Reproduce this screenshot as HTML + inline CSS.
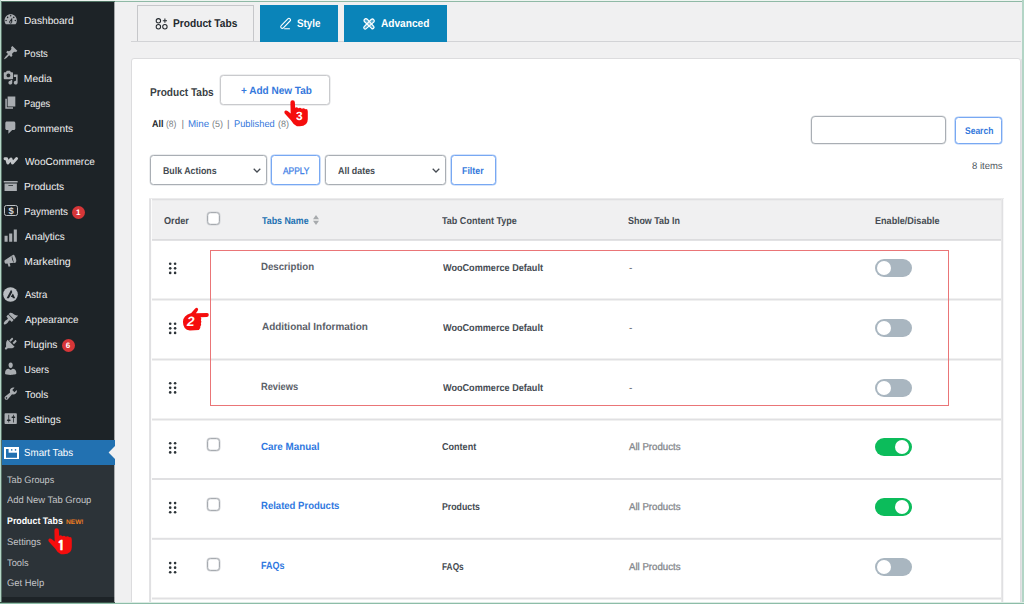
<!DOCTYPE html>
<html lang="en">
<head>
<meta charset="utf-8">
<title>Product Tabs</title>
<style>
*{box-sizing:border-box;margin:0;padding:0}
html,body{width:1024px;height:604px;overflow:hidden;background:#f0f0f1}
body{font-family:"Liberation Sans","DejaVu Sans",sans-serif;font-size:10px;color:#3c434a;position:relative;text-rendering:geometricPrecision}
.a{position:absolute}
.x{position:absolute;white-space:nowrap;line-height:1;transform-origin:0 0;text-rendering:geometricPrecision}
.ic{position:absolute;left:3px;width:15.4px;height:15.4px;fill:#a9adb1}
.badge{position:absolute;width:13px;height:13px;border-radius:50%;background:#d63638;color:#fff;font-size:8px;line-height:13px;text-align:center;font-weight:bold}
.hl{position:absolute;left:151px;width:851px;height:1px;background:#dcdcde}
.tg{position:absolute;left:875px;width:36.6px;height:18px;border-radius:9px;background:#a9b6c0}
.tg i{position:absolute;top:2px;left:2.4px;width:14px;height:14px;border-radius:50%;background:#fff}
.tg.on{background:#0cbc5b}
.tg.on i{left:20.2px}
.cb{position:absolute;left:207px;width:13px;height:13px;border:1px solid #a7abb0;border-radius:3.5px;background:#fff;box-shadow:0 0 0 .5px #d4d6d9,inset 0 0 0 .5px #d9dbde}
.dr{position:absolute;left:168px;width:9px;height:12px;fill:#2c3338}
.btn{position:absolute;border:1px solid #78a8f2;border-radius:3.5px;background:#fff;box-shadow:0 0 0 .6px #a9c8f7}
.sel{position:absolute;border:1px solid #a9aeb4;border-radius:3.5px;background:#fff;box-shadow:0 0 0 .5px #d9dcdf}
.chev{position:absolute;width:8px;height:5px;fill:none;stroke:#454b52;stroke-width:1.25}
.hand{position:absolute;fill:#f50d0d}
</style>
</head>
<body>

<!-- ============ SIDEBAR ============ -->
<div class="a" style="left:0;top:0;width:114px;height:604px;background:#1d2327"></div>
<div class="a" style="left:114px;top:0;width:1px;height:604px;background:#a3a6a8"></div>
<div class="a" style="left:0;top:440px;width:115px;height:25px;background:#2271b1"></div>
<div class="a" style="left:0;top:465px;width:114px;height:132px;background:#2c3338"></div>
<div class="a" style="left:114px;top:465px;width:1px;height:132px;background:#aaadaf"></div>
<svg class="a" style="left:108px;top:446px;width:7px;height:13px" viewBox="0 0 7 13"><path d="M7 0 L0.6 6.5 L7 13 Z" fill="#f0f0f1"/></svg>

<svg class="ic" style="top:12.4px" viewBox="0 0 20 20"><path fill-rule="evenodd" d="M3.76 16h12.48A8.027 8.027 0 0018 11c0-4.42-3.58-8-8-8s-8 3.58-8 8c0 1.9.66 3.63 1.76 5zM10 4c.55 0 1 .45 1 1s-.45 1-1 1-1-.45-1-1 .45-1 1-1zM6 6c.55 0 1 .45 1 1s-.45 1-1 1-1-.45-1-1 .45-1 1-1zm8 0c.55 0 1 .45 1 1s-.45 1-1 1-1-.45-1-1 .45-1 1-1zm-5.37 5.55L12 7v6c0 1.1-.9 2-2 2s-2-.9-2-2c0-.57.24-1.08.63-1.450zM4 10c.55 0 1 .45 1 1s-.45 1-1 1-1-.45-1-1 .45-1 1-1zm12 0c.55 0 1 .45 1 1s-.45 1-1 1-1-.45-1-1 .45-1 1-1zm-5 3c0-.55-.45-1-1-1s-1 .45-1 1 .45 1 1 1 1-.45 1-1z"/></svg>
<svg class="ic" style="top:45.4px" viewBox="0 0 20 20"><path fill-rule="evenodd" d="M10.44 3.02l1.82-1.82 6.36 6.35-1.83 1.82c-1.05-.68-2.48-.57-3.41.36l-.75.75c-.92.93-1.04 2.35-.35 3.41l-1.83 1.82-2.41-2.41-2.8 2.79c-.42.42-3.38 2.71-3.8 2.29s1.860-3.390 2.280-3.810l2.790-2.790L4.100 9.360l1.830-1.820c1.050.690 2.480.570 3.400-.360l.750-.750c.930-.920 1.050-2.350.360-3.410z"/></svg>
<svg class="ic" style="top:70.4px" viewBox="0 0 20 20"><path fill-rule="evenodd" d="M13 11V4c0-.55-.45-1-1-1h-1.67L9 1H5L3.67 3H2c-.55 0-1 .45-1 1v7c0 .55.45 1 1 1h10c.55 0 1-.45 1-1zM7 4.5c1.38 0 2.5 1.12 2.5 2.5S8.38 9.5 7 9.5 4.5 8.38 4.5 7 5.62 4.5 7 4.5zM14 6h5v10.500c0 1.380-1.120 2.500-2.500 2.500S14 17.880 14 16.500s1.120-2.500 2.500-2.500c.170 0 .340.020.500.050V9h-3V6zm-4 8.050V13h2v3.500c0 1.380-1.120 2.500-2.500 2.500S7 17.880 7 16.500 8.120 14 9.500 14c.170 0 .340.020.500.050z"/></svg>
<svg class="ic" style="top:95.4px" viewBox="0 0 20 20"><path fill-rule="evenodd" d="M6 15V2h10v13H6zm-1 1h8v2H3V5h2v11z"/></svg>
<svg class="ic" style="top:120.4px" viewBox="0 0 20 20"><path fill-rule="evenodd" d="M5 2h9c1.100 0 2 .900 2 2v7c0 1.100-.900 2-2 2h-2l-5 5v-5H5c-1.100 0-2-.900-2-2V4c0-1.100.900-2 2-2z"/></svg>
<svg class="ic" style="top:178.4px" viewBox="0 0 20 20"><path fill-rule="evenodd" d="M19 4v2H1V4h18zM2 7h16v10H2V7zm11 3V9H7v1h6z"/></svg>
<svg class="ic" style="top:228.4px" viewBox="0 0 20 20"><path fill-rule="evenodd" d="M18 18V2h-4v16h4zm-6 0V7H8v11h4zm-6 0v-8H2v8h4z"/></svg>
<svg class="ic" style="top:253.4px" viewBox="0 0 20 20"><path fill-rule="evenodd" d="M2.200 9.300 L11.600 3.400 L14.200 12.600 L8.600 13.300 L9.700 17.300 L7.300 17.900 L5.900 13.600 L3.400 13.900 C1.900 13.200 1.500 10.600 2.200 9.300 Z M13.300 3.100 C15.800 3.600 17.900 9.800 15.900 12.300 C17.900 10.500 16.000 3.300 13.300 3.100 Z M12.600 2.600 a2.400 5.200 -15 1 0 3.400 10.200 a2.400 5.200 -15 1 0 -3.400 -10.200 Z"/></svg>
<svg class="ic" style="top:311.4px" viewBox="0 0 20 20"><path fill-rule="evenodd" d="M14.480 11.060L7.410 3.990l1.500-1.500c.500-.560 2.300-.470 3.510.320 1.210.800 1.430 1.280 2.910 2.100 1.180.640 2.450 1.260 4.450.850zm-.710.710L6.700 4.700 4.930 6.470c-.390.390-.390 1.020 0 1.410l1.060 1.060c.390.390.390 1.030 0 1.420-.600.600-1.430 1.110-2.210 1.690-.350.260-.700.530-1.010.840C1.430 14.230.400 16.080 1.400 17.070c.990 1 2.840-.030 4.180-1.360.310-.310.580-.660.850-1.020.570-.780 1.080-1.610 1.690-2.210.390-.390 1.020-.390 1.410 0l1.060 1.060c.390.390 1.020.390 1.410 0z"/></svg>
<svg class="ic" style="top:336.4px" viewBox="0 0 20 20"><path fill-rule="evenodd" d="M13.110 4.360L9.870 7.600 8 5.730l3.240-3.240c.350-.340 1.050-.200 1.560.320.520.510.660 1.210.310 1.550zm-8 1.770l.910-1.120 9.010 9.010-1.190.840c-.710.710-2.630 1.160-3.820 1.160H6.140L4.900 17.260c-.590.590-1.540.590-2.120 0-.590-.580-.590-1.530 0-2.120L4 13.900V10c0-1.150.430-3.160 1.110-3.870zm12.060-.300c.510.520.660 1.210.310 1.560l-3.240 3.240-1.870-1.870 3.240-3.240c.350-.350 1.040-.210 1.560.310z"/></svg>
<svg class="ic" style="top:361.4px" viewBox="0 0 20 20"><path fill-rule="evenodd" d="M10 9.250c-2.270 0-2.730-3.440-2.730-3.440C7 4.020 7.820 2 9.970 2c2.160 0 2.980 2.020 2.710 3.810 0 0-.410 3.440-2.680 3.440zm0 2.570L12.720 10c2.390 0 4.520 2.330 4.520 4.530v2.490s-3.650 1.130-7.240 1.130c-3.650 0-7.240-1.130-7.240-1.130v-2.490c0-2.250 1.940-4.480 4.470-4.480z"/></svg>
<svg class="ic" style="top:386.4px" viewBox="0 0 20 20"><path fill-rule="evenodd" d="M16.680 9.770c-1.340 1.340-3.300 1.670-4.950.990l-5.410 6.520c-.990.990-2.590.990-3.580 0s-.990-2.590 0-3.570l6.520-5.420c-.680-1.650-.350-3.610.990-4.950 1.280-1.280 3.120-1.620 4.720-1.060l-2.890 2.890 2.820 2.820 2.860-2.870c.530 1.580.180 3.390-1.080 4.650zM3.810 16.210c.400.390 1.040.390 1.430 0 .400-.400.400-1.040 0-1.430-.390-.400-1.030-.400-1.430 0-.390.390-.390 1.030 0 1.430z"/></svg>
<svg class="ic" style="top:411.4px" viewBox="0 0 20 20"><path fill-rule="evenodd" d="M18 16V4c0-.550-.450-1-1-1H3c-.550 0-1 .450-1 1v12c0 .550.450 1 1 1h14c.550 0 1-.450 1-1zM8 11h1c.550 0 1 .450 1 1s-.450 1-1 1H8v1.500c0 .280-.220.500-.500.500s-.500-.220-.500-.500V13H6c-.550 0-1-.450-1-1s.450-1 1-1h1V5.500c0-.280.220-.500.500-.500s.500.220.500.500V11zm5-2h-1c-.550 0-1-.450-1-1s.450-1 1-1h1V5.500c0-.280.220-.500.500-.500s.500.220.500.500V7h1c.550 0 1 .450 1 1s-.450 1-1 1h-1v5.500c0 .280-.220.500-.500.500s-.500-.220-.500-.500V9z"/></svg>
<svg class="a" style="left:3px;top:156px;width:16px;height:10px" viewBox="0 0 16 10" fill="none" stroke="#c3c6c9" stroke-width="2.9" stroke-linejoin="round" stroke-linecap="round"><path d="M2.0 2.8 L3.7 2.8 L4.8 7.0 L8.0 3.0 L9.5 7.0 L13.6 2.6"/></svg>
<div class="a" style="left:4px;top:205.2px;width:14.4px;height:11.2px;border:1.8px solid #bec2c6;border-radius:2.4px"></div>
<div class="x" style="left:8.5px;top:206px;font-size:9.4px;font-weight:bold;color:#d5d8da">$</div>
<svg class="a" style="left:3.4px;top:287px;width:15px;height:15px" viewBox="0 0 15 15"><circle cx="7.5" cy="7.5" r="7.3" fill="#b9bdc1"/><path d="M8.1 2.8 L3.6 11.3 L5.9 11.3 L9.3 5.0 Z M8.9 7.9 L7.7 10.1 L9.3 10.1 L9.9 11.3 L12.2 11.3 L9.9 6.4 Z" fill="#1d2327"/></svg>
<svg class="a" style="left:3.8px;top:446.6px;width:15px;height:12.8px" viewBox="0 0 15 12.8"><rect x="1" y="1" width="13" height="10.8" fill="none" stroke="#fff" stroke-width="2"/><rect x="4.6" y="1" width="9" height="4.7" fill="#fff"/><circle cx="7.7" cy="2.9" r=".8" fill="#2271b1"/><circle cx="11.5" cy="2.9" r=".8" fill="#2271b1"/></svg>

<div class="badge" style="left:71.8px;top:205.6px">1</div>
<div class="badge" style="left:61.5px;top:338.8px">6</div>

<!-- ============ TAB BAR ============ -->
<div class="a" style="left:131px;top:41px;width:890px;height:1px;background:#d2d3d6"></div>
<div class="a" style="left:137px;top:5px;width:117px;height:36px;background:#f0f0f1;border:1px solid #c6c7ca;border-bottom:none"></div>
<div class="a" style="left:260px;top:5px;width:78px;height:37px;background:#0a84b9"></div>
<div class="a" style="left:344px;top:5px;width:103px;height:37px;background:#0a84b9"></div>
<svg class="a" style="left:155px;top:17px;width:14px;height:14px" viewBox="0 0 14 14" fill="none" stroke="#23282d" stroke-width="1.05"><circle cx="3.4" cy="3.8" r="2.2"/><circle cx="3.4" cy="9.7" r="2.2"/><circle cx="9.9" cy="9.7" r="2.2"/><path d="M9.9 1.6v4.2M7.8 3.7h4.2"/></svg>
<svg class="a" style="left:278px;top:17px;width:15px;height:14px" viewBox="0 0 15 14" fill="none" stroke="#fff" stroke-width="1.1" stroke-linecap="round"><path d="M3.2 10.9 a1.55 1.55 0 0 1 0 -2.2 l6.6 -6.9 a1.55 1.55 0 0 1 2.2 2.2 l-6.6 6.9 a1.55 1.55 0 0 1 -2.2 0z"/><path d="M6.6 11.8h4.9"/></svg>
<svg class="a" style="left:362px;top:17px;width:14px;height:14px" viewBox="0 0 14 14" fill="rgba(255,255,255,.3)" stroke="#fff" stroke-width="1.25" stroke-linecap="round" stroke-linejoin="round"><path d="M2.2 11.6 a1.4 1.4 0 0 1 0 -2 l7.2 -7.3 a1.9 1.9 0 0 1 2.6 2.6 l-7.8 6.7 a1.4 1.4 0 0 1 -2 0z"/><path d="M2.6 2.2 a1.8 1.8 0 0 1 2.6 0 l6.5 7.1 a1.5 1.5 0 0 1 -2.1 2.1 l-7 -6.6 a1.8 1.8 0 0 1 0 -2.6z"/></svg>

<!-- ============ PANEL ============ -->
<div class="a" style="left:131px;top:58px;width:890px;height:560px;background:#fff;border:1px solid #dcdcde;border-radius:3px"></div>
<div class="a" style="left:1021px;top:59px;width:1px;height:545px;background:#e2e2e4"></div>

<div class="a" style="left:220px;top:75px;width:110px;height:30px;border:1px solid #c9cacd;border-radius:3.5px;background:#fff;box-shadow:0 0 0 .5px #dedfe1"></div>

<div class="sel" style="left:811px;top:116px;width:135px;height:28px;border-radius:4px"></div>
<div class="btn" style="left:954.5px;top:116.5px;width:47.5px;height:27px"></div>

<div class="sel" style="left:150px;top:155px;width:117px;height:30px"></div>
<svg class="chev" style="left:252.8px;top:167.8px" viewBox="0 0 8 5"><path d="M0.7 0.7L4 4L7.3 0.7"/></svg>
<div class="btn" style="left:271px;top:155px;width:49px;height:30px"></div>
<div class="sel" style="left:325px;top:155px;width:121px;height:30px"></div>
<svg class="chev" style="left:431.6px;top:167.8px" viewBox="0 0 8 5"><path d="M0.7 0.7L4 4L7.3 0.7"/></svg>
<div class="btn" style="left:450.5px;top:155px;width:45.5px;height:30px"></div>

<!-- ============ TABLE ============ -->
<div class="a" style="left:150px;top:199px;width:853px;height:41px;background:#f0f0f1"></div>
<div class="a" style="left:149px;top:198px;width:855px;height:1px;background:rgb(235,235,236)"></div><div class="a" style="left:149px;top:199px;width:855px;height:1px;background:rgb(223,223,225)"></div><div class="a" style="left:149px;top:200px;width:855px;height:1px;background:rgb(235,235,236)"></div>
<div class="a" style="left:149px;top:239px;width:855px;height:1px;background:rgb(220,220,222)"></div><div class="a" style="left:149px;top:240px;width:855px;height:1px;background:rgb(226,226,228)"></div>
<div class="a" style="left:149px;top:298px;width:855px;height:1px;background:rgb(240,240,240)"></div><div class="a" style="left:149px;top:299px;width:855px;height:1px;background:rgb(224,224,226)"></div><div class="a" style="left:149px;top:300px;width:855px;height:1px;background:rgb(240,240,240)"></div>
<div class="a" style="left:149px;top:358px;width:855px;height:1px;background:rgb(240,240,240)"></div><div class="a" style="left:149px;top:359px;width:855px;height:1px;background:rgb(224,224,226)"></div><div class="a" style="left:149px;top:360px;width:855px;height:1px;background:rgb(240,240,240)"></div>
<div class="a" style="left:149px;top:418px;width:855px;height:1px;background:rgb(240,240,240)"></div><div class="a" style="left:149px;top:419px;width:855px;height:1px;background:rgb(224,224,226)"></div><div class="a" style="left:149px;top:420px;width:855px;height:1px;background:rgb(240,240,240)"></div>
<div class="a" style="left:149px;top:478px;width:855px;height:1px;background:rgb(224,224,226)"></div><div class="a" style="left:149px;top:479px;width:855px;height:1px;background:rgb(224,224,226)"></div>
<div class="a" style="left:149px;top:537px;width:855px;height:1px;background:rgb(249,249,249)"></div><div class="a" style="left:149px;top:538px;width:855px;height:1px;background:rgb(224,224,226)"></div><div class="a" style="left:149px;top:539px;width:855px;height:1px;background:rgb(230,230,232)"></div>
<div class="a" style="left:149px;top:597px;width:855px;height:1px;background:rgb(240,240,240)"></div><div class="a" style="left:149px;top:598px;width:855px;height:1px;background:rgb(224,224,226)"></div><div class="a" style="left:149px;top:599px;width:855px;height:1px;background:rgb(240,240,240)"></div>
<div class="a" style="left:149px;top:199px;width:1px;height:405px;background:rgb(227,227,229)"></div><div class="a" style="left:150px;top:199px;width:1px;height:405px;background:rgb(224,224,226)"></div><div class="a" style="left:151px;top:199px;width:1px;height:405px;background:rgb(252,252,252)"></div>
<div class="a" style="left:1001px;top:199px;width:1px;height:405px;background:rgb(232,232,233)"></div><div class="a" style="left:1002px;top:199px;width:1px;height:405px;background:rgb(224,224,226)"></div><div class="a" style="left:1003px;top:199px;width:1px;height:405px;background:rgb(247,247,248)"></div>

<div class="cb" style="top:212px"></div>
<svg class="a" style="left:313px;top:215px;width:6px;height:10px" viewBox="0 0 6 10" fill="#a7aaad"><path d="M3 0L6 4.2H0Z"/><path d="M3 10L6 5.8H0Z"/></svg>

<svg class="dr" style="top:261px;height:14px" viewBox="0 0 9 14"><circle cx="2.2" cy="2.80" r="1.3"/><circle cx="2.2" cy="7.37" r="1.3"/><circle cx="2.2" cy="11.90" r="1.3"/><circle cx="7.1" cy="2.80" r="1.3"/><circle cx="7.1" cy="7.37" r="1.3"/><circle cx="7.1" cy="11.90" r="1.3"/></svg>
<svg class="dr" style="top:321px;height:14px" viewBox="0 0 9 14"><circle cx="2.2" cy="2.80" r="1.3"/><circle cx="2.2" cy="7.37" r="1.3"/><circle cx="2.2" cy="11.90" r="1.3"/><circle cx="7.1" cy="2.80" r="1.3"/><circle cx="7.1" cy="7.37" r="1.3"/><circle cx="7.1" cy="11.90" r="1.3"/></svg>
<svg class="dr" style="top:381px;height:14px" viewBox="0 0 9 14"><circle cx="2.2" cy="2.30" r="1.3"/><circle cx="2.2" cy="6.87" r="1.3"/><circle cx="2.2" cy="11.40" r="1.3"/><circle cx="7.1" cy="2.30" r="1.3"/><circle cx="7.1" cy="6.87" r="1.3"/><circle cx="7.1" cy="11.40" r="1.3"/></svg>
<svg class="dr" style="top:441px;height:14px" viewBox="0 0 9 14"><circle cx="2.2" cy="2.30" r="1.3"/><circle cx="2.2" cy="6.87" r="1.3"/><circle cx="2.2" cy="11.40" r="1.3"/><circle cx="7.1" cy="2.30" r="1.3"/><circle cx="7.1" cy="6.87" r="1.3"/><circle cx="7.1" cy="11.40" r="1.3"/></svg>
<svg class="dr" style="top:501px;height:14px" viewBox="0 0 9 14"><circle cx="2.2" cy="2.10" r="1.3"/><circle cx="2.2" cy="6.67" r="1.3"/><circle cx="2.2" cy="11.20" r="1.3"/><circle cx="7.1" cy="2.10" r="1.3"/><circle cx="7.1" cy="6.67" r="1.3"/><circle cx="7.1" cy="11.20" r="1.3"/></svg>
<svg class="dr" style="top:561px;height:14px" viewBox="0 0 9 14"><circle cx="2.2" cy="2.10" r="1.3"/><circle cx="2.2" cy="6.67" r="1.3"/><circle cx="2.2" cy="11.20" r="1.3"/><circle cx="7.1" cy="2.10" r="1.3"/><circle cx="7.1" cy="6.67" r="1.3"/><circle cx="7.1" cy="11.20" r="1.3"/></svg>
<div class="cb" style="top:438px"></div>
<div class="cb" style="top:498px"></div>
<div class="cb" style="top:558px"></div>
<div class="tg" style="top:259px"><i></i></div>
<div class="tg" style="top:319px"><i></i></div>
<div class="tg" style="top:379px"><i></i></div>
<div class="tg on" style="top:438px"><i></i></div>
<div class="tg on" style="top:498px"><i></i></div>
<div class="tg" style="top:558px"><i></i></div>

<!-- red annotation box -->
<div class="a" style="left:210.2px;top:249.6px;width:738.8px;height:156.6px;border:1.2px solid #ea7577"></div>

<!-- hands -->
<svg class="hand" style="left:40px;top:525px;width:40px;height:30px" viewBox="0 0 805 604"><path d="M290 110Q290 65 335 65Q380 65 380 110L385 215Q420 195 450 225Q490 205 520 235Q560 215 590 245Q640 235 640 290L640 450Q640 590 480 590L420 590Q350 560 300 470L175 330Q150 295 190 272Q215 265 240 285L295 330Z"/></svg>
<svg class="hand" style="left:276.2px;top:96.8px;width:40px;height:30px" viewBox="0 0 805 604"><path d="M290 110Q290 65 335 65Q380 65 380 110L385 215Q420 195 450 225Q490 205 520 235Q560 215 590 245Q640 235 640 290L640 450Q640 590 480 590L420 590Q350 560 300 470L175 330Q150 295 190 272Q215 265 240 285L295 330Z"/></svg>
<svg class="hand" style="left:176px;top:300px;width:40px;height:40px" viewBox="0 0 604 604"><path d="M105 330Q105 230 230 195L280 140Q300 105 325 120Q345 140 325 165L300 200L470 198Q497 200 495 227Q493 255 465 256L372 262Q392 285 376 305Q392 330 376 350Q388 378 368 395Q375 430 345 452L210 462Q105 450 105 330Z"/></svg>
<div class="x" style="left:56.6px;top:538.8px;font-size:53px;font-weight:bold;color:#fff;-webkit-text-stroke:2.5px #fff;transform:scale(.26,.25);font-family:'NanumGothic','Liberation Sans',sans-serif">1</div>
<div class="x" style="left:187.4px;top:315px;font-size:54px;font-weight:bold;font-style:italic;color:#fff;transform:scale(.25)">2</div>
<div class="x" style="left:295.9px;top:109.8px;font-size:48px;font-weight:bold;color:#fff;transform:scale(.25)">3</div>

<!-- ============ TEXT ============ -->
<div class="x" style="left:23.89px;top:17px;font-size:10.3px;color:#f0f0f1;transform:scaleX(0.9852);">Dashboard</div>
<div class="x" style="left:23.94px;top:50px;font-size:10.3px;color:#f0f0f1;transform:scaleX(0.9245);">Posts</div>
<div class="x" style="left:23.87px;top:75px;font-size:10.3px;color:#f0f0f1;">Media</div>
<div class="x" style="left:23.96px;top:100px;font-size:10.3px;color:#f0f0f1;transform:scaleX(0.8982);">Pages</div>
<div class="x" style="left:24.26px;top:125px;font-size:10.3px;color:#f0f0f1;transform:scaleX(0.9852);">Comments</div>
<div class="x" style="left:24.75px;top:158px;font-size:10.3px;color:#f0f0f1;transform:scaleX(0.9792);">WooCommerce</div>
<div class="x" style="left:23.89px;top:183px;font-size:10.3px;color:#f0f0f1;transform:scaleX(0.9879);">Products</div>
<div class="x" style="left:23.91px;top:208px;font-size:10.3px;color:#f0f0f1;transform:scaleX(0.9584);">Payments</div>
<div class="x" style="left:24.75px;top:233px;font-size:10.3px;color:#f0f0f1;transform:scaleX(0.9639);">Analytics</div>
<div class="x" style="left:23.84px;top:258px;font-size:10.3px;color:#f0f0f1;transform:scaleX(1.0350);">Marketing</div>
<div class="x" style="left:24.75px;top:291px;font-size:10.3px;color:#f0f0f1;transform:scaleX(0.9229);">Astra</div>
<div class="x" style="left:24.75px;top:316px;font-size:10.3px;color:#f0f0f1;transform:scaleX(0.9642);">Appearance</div>
<div class="x" style="left:23.88px;top:341px;font-size:10.3px;color:#f0f0f1;transform:scaleX(0.9892);">Plugins</div>
<div class="x" style="left:24.05px;top:366px;font-size:10.3px;color:#f0f0f1;transform:scaleX(0.9282);">Users</div>
<div class="x" style="left:24.51px;top:391px;font-size:10.3px;color:#f0f0f1;transform:scaleX(0.9690);">Tools</div>
<div class="x" style="left:24.26px;top:416px;font-size:10.3px;color:#f0f0f1;transform:scaleX(0.9869);">Settings</div>
<div class="x" style="left:24.03px;top:449px;font-size:10.3px;color:#ffffff;transform:scaleX(0.9471);">Smart Tabs</div>
<div class="x" style="left:6.86px;top:476px;font-size:9.6px;color:#c3c4c7;transform:scaleX(0.9531);">Tab Groups</div>
<div class="x" style="left:7.10px;top:496px;font-size:9.6px;color:#c3c4c7;transform:scaleX(0.9782);">Add New Tab Group</div>
<div class="x" style="left:6.52px;top:517px;font-size:9.6px;color:#ffffff;font-weight:700;transform:scaleX(0.9208);">Product Tabs</div>
<div class="x" style="left:66.31px;top:520px;font-size:6.4px;color:#ee7f22;font-weight:700;transform:scaleX(1.0295);">NEW!</div>
<div class="x" style="left:6.51px;top:538px;font-size:9.6px;color:#c3c4c7;transform:scaleX(0.9830);">Settings</div>
<div class="x" style="left:6.86px;top:559px;font-size:9.6px;color:#c3c4c7;transform:scaleX(0.9655);">Tools</div>
<div class="x" style="left:6.51px;top:579px;font-size:9.6px;color:#c3c4c7;transform:scaleX(0.9811);">Get Help</div>
<div class="x" style="left:172.92px;top:19px;font-size:11.2px;color:#23282d;font-weight:700;transform:scaleX(0.9108);">Product Tabs</div>
<div class="x" style="left:297.47px;top:19px;font-size:11.2px;color:#ffffff;font-weight:700;transform:scaleX(0.8731);">Style</div>
<div class="x" style="left:381.27px;top:19px;font-size:11.2px;color:#ffffff;font-weight:700;transform:scaleX(0.9048);">Advanced</div>
<div class="x" style="left:150.34px;top:88px;font-size:11.4px;color:#3a3f45;font-weight:700;transform:scaleX(0.8855);">Product Tabs</div>
<div class="x" style="left:240.65px;top:86px;font-size:10.6px;color:#3478dc;font-weight:700;transform:scaleX(0.9448);">+ Add New Tab</div>
<div class="x" style="left:152.02px;top:120px;font-size:9.8px;color:#23282d;font-weight:700;transform:scaleX(0.9161);">All</div>
<div class="x" style="left:166.04px;top:120px;font-size:9.2px;color:#787c82;transform:scaleX(0.9284);">(8)</div>
<div class="x" style="left:181.43px;top:120px;font-size:9.8px;color:#787c82;">|</div>
<div class="x" style="left:187.75px;top:120px;font-size:9.8px;color:#3478dc;transform:scaleX(0.9950);">Mine</div>
<div class="x" style="left:211.76px;top:120px;font-size:9.2px;color:#787c82;transform:scaleX(0.9778);">(5)</div>
<div class="x" style="left:227.12px;top:120px;font-size:9.8px;color:#787c82;">|</div>
<div class="x" style="left:234.04px;top:120px;font-size:9.8px;color:#3478dc;transform:scaleX(0.9465);">Published</div>
<div class="x" style="left:277.51px;top:120px;font-size:9.2px;color:#787c82;transform:scaleX(0.9778);">(8)</div>
<div class="x" style="left:162.94px;top:167px;font-size:9.8px;color:#454b52;font-weight:700;transform:scaleX(0.9000);">Bulk Actions</div>
<div class="x" style="left:283.00px;top:167px;font-size:9.6px;color:#3f7fe6;transform:scaleX(0.8717);-webkit-text-stroke:.3px #3f7fe6;">APPLY</div>
<div class="x" style="left:338.27px;top:167px;font-size:9.8px;color:#454b52;font-weight:700;transform:scaleX(0.9072);">All dates</div>
<div class="x" style="left:462.44px;top:167px;font-size:9.8px;color:#3478dc;font-weight:700;transform:scaleX(0.9038);">Filter</div>
<div class="x" style="left:964.53px;top:127px;font-size:9.8px;color:#3478dc;font-weight:700;transform:scaleX(0.8675);">Search</div>
<div class="x" style="left:971.89px;top:162px;font-size:9.8px;color:#50575e;transform:scaleX(0.9684);">8 items</div>
<div class="x" style="left:163.91px;top:217px;font-size:10px;color:#454b52;font-weight:700;transform:scaleX(0.9121);">Order</div>
<div class="x" style="left:261.64px;top:217px;font-size:10px;color:#2271b1;font-weight:700;transform:scaleX(0.8854);">Tabs Name</div>
<div class="x" style="left:442.39px;top:217px;font-size:10px;color:#454b52;font-weight:700;transform:scaleX(0.9018);">Tab Content Type</div>
<div class="x" style="left:628.48px;top:217px;font-size:10px;color:#454b52;font-weight:700;transform:scaleX(0.8926);">Show Tab In</div>
<div class="x" style="left:874.93px;top:217px;font-size:10px;color:#454b52;font-weight:700;transform:scaleX(0.9077);">Enable/Disable</div>
<div class="x" style="left:261.17px;top:263px;font-size:10.4px;color:#5a6068;font-weight:700;transform:scaleX(0.9289);">Description</div>
<div class="x" style="left:442.50px;top:264px;font-size:10px;color:#454b52;font-weight:700;transform:scaleX(0.9103);">WooCommerce Default</div>
<div class="x" style="left:629.12px;top:264px;font-size:10px;color:#50575e;">-</div>
<div class="x" style="left:261.51px;top:323px;font-size:10.4px;color:#5a6068;font-weight:700;transform:scaleX(0.9559);">Additional Information</div>
<div class="x" style="left:442.50px;top:324px;font-size:10px;color:#454b52;font-weight:700;transform:scaleX(0.9103);">WooCommerce Default</div>
<div class="x" style="left:629.12px;top:324px;font-size:10px;color:#50575e;">-</div>
<div class="x" style="left:261.19px;top:383px;font-size:10.4px;color:#5a6068;font-weight:700;transform:scaleX(0.8926);">Reviews</div>
<div class="x" style="left:442.50px;top:384px;font-size:10px;color:#454b52;font-weight:700;transform:scaleX(0.9103);">WooCommerce Default</div>
<div class="x" style="left:629.12px;top:384px;font-size:10px;color:#50575e;">-</div>
<div class="x" style="left:261.40px;top:443px;font-size:10.4px;color:#2f78e0;font-weight:700;transform:scaleX(0.9449);">Care Manual</div>
<div class="x" style="left:442.16px;top:443px;font-size:10px;color:#454b52;font-weight:700;transform:scaleX(0.9047);">Content</div>
<div class="x" style="left:629.20px;top:443px;font-size:10px;color:#84878c;transform:scaleX(0.9660);-webkit-text-stroke:.3px #84878c;">All Products</div>
<div class="x" style="left:261.18px;top:502px;font-size:10.4px;color:#2f78e0;font-weight:700;transform:scaleX(0.9173);">Related Products</div>
<div class="x" style="left:441.95px;top:503px;font-size:10px;color:#454b52;font-weight:700;transform:scaleX(0.8755);">Products</div>
<div class="x" style="left:629.20px;top:503px;font-size:10px;color:#84878c;transform:scaleX(0.9660);-webkit-text-stroke:.3px #84878c;">All Products</div>
<div class="x" style="left:261.21px;top:562px;font-size:10.4px;color:#2f78e0;font-weight:700;transform:scaleX(0.8670);">FAQs</div>
<div class="x" style="left:441.98px;top:563px;font-size:10px;color:#454b52;font-weight:700;transform:scaleX(0.8318);">FAQs</div>
<div class="x" style="left:629.20px;top:563px;font-size:10px;color:#84878c;transform:scaleX(0.9660);-webkit-text-stroke:.3px #84878c;">All Products</div>

<!-- frame -->
<div class="a" style="left:0;top:0;width:1024px;height:1px;background:#eef5f1"></div>
<div class="a" style="left:0;top:1px;width:1024px;height:1px;background:#8fb9a6"></div>
<div class="a" style="left:0;top:1px;width:115px;height:1px;background:#4f7363"></div>
<div class="a" style="left:0;top:0;width:1px;height:604px;background:#b4d7c7"></div>
<div class="a" style="left:1px;top:1px;width:1px;height:603px;background:#566f66"></div>
<div class="a" style="left:1022px;top:0;width:2px;height:604px;background:#b3d5c6"></div>
<div class="a" style="left:0;top:602px;width:1024px;height:1px;background:#dcebe4"></div>
<div class="a" style="left:0;top:602px;width:115px;height:1px;background:#3a5249"></div>
<div class="a" style="left:0;top:603px;width:1024px;height:1px;background:#8dbda8"></div>
</body>
</html>
